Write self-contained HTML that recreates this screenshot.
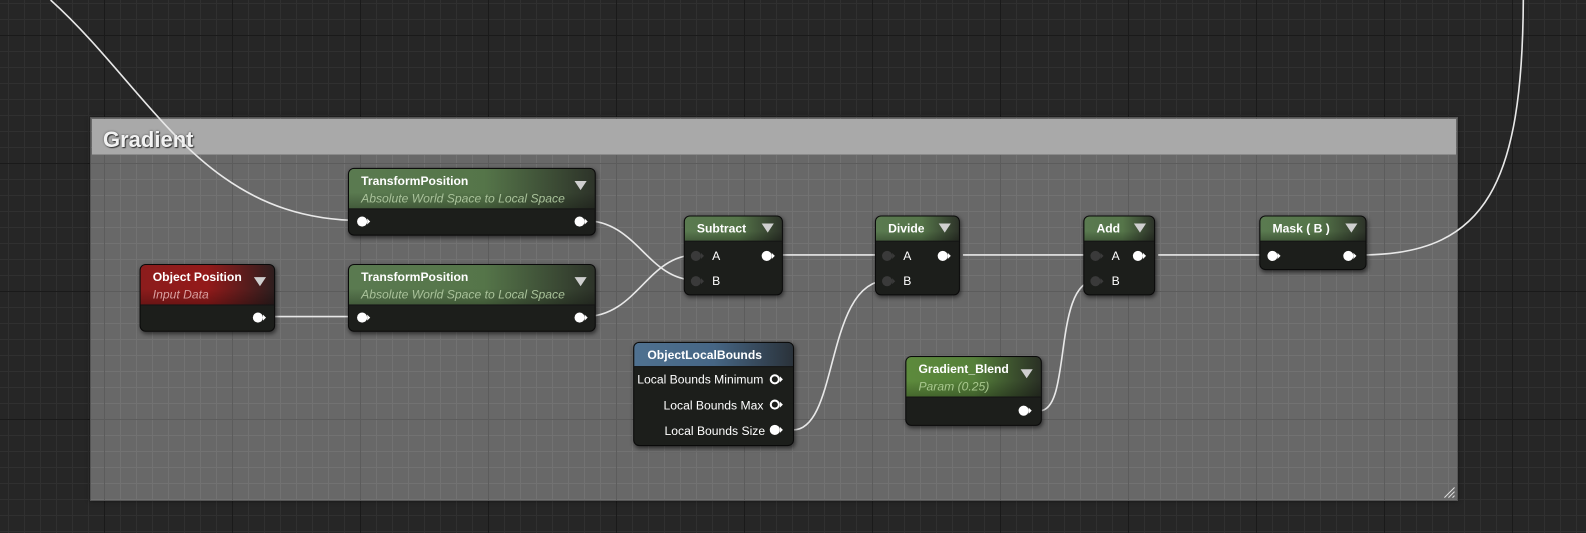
<!DOCTYPE html>
<html><head><meta charset="utf-8"><style>
*{margin:0;padding:0;box-sizing:border-box}
body{width:1586px;height:533px;overflow:hidden;position:relative;font-family:"Liberation Sans",sans-serif;
background-color:#262626;
background-image:linear-gradient(#1a1a1a 1px,transparent 1px),linear-gradient(90deg,#1a1a1a 1px,transparent 1px),linear-gradient(#303030 1px,transparent 1px),linear-gradient(90deg,#303030 1px,transparent 1px);
background-size:128px 128px,128px 128px,16px 16px,16px 16px;
background-position:0 35px,104px 0,0 3px,8px 0}
.box{position:absolute;left:90px;top:117px;width:1368px;height:384px;background-color:#686868;border:1px solid #555;
background-image:linear-gradient(#5c5c5c 1px,transparent 1px),linear-gradient(90deg,#5c5c5c 1px,transparent 1px),linear-gradient(#727272 1px,transparent 1px),linear-gradient(90deg,#727272 1px,transparent 1px);
background-size:128px 128px,128px 128px,16px 16px,16px 16px;
background-position:0 45px,13px 0,0 13px,13px 0;box-shadow:0 0 4px rgba(0,0,0,.5)}
.tb{position:absolute;left:1px;top:1px;right:1px;height:36px;background:#a9a9a9;border-bottom:1px solid #8a8a8a}
.tb span{position:absolute;left:11px;top:8px;font-size:22px;font-weight:bold;color:#f2f2f2;text-shadow:1px 1px 1px #333,0 0 2px #555}
.sc{position:absolute;left:0;top:0;width:1568px;height:527px;transform:scale(1.0115);transform-origin:0 0}
svg{position:absolute;left:0;top:0}
.n{position:absolute;background:#1c1e1b;border:1px solid #0a0a0a;border-radius:6px;box-shadow:1px 2px 4px rgba(0,0,0,.55);overflow:hidden}
.h{position:relative;color:#fff;font-size:12px;font-weight:bold;padding:5px 0 0 12px;border-bottom:1px solid #151515}
.g{background:linear-gradient(to bottom,rgba(0,0,0,0) 60%,rgba(0,0,0,.25)),linear-gradient(90deg,#5a7a50,#557549 55%,#2d3329 100%)}
.r{background:linear-gradient(to bottom,rgba(0,0,0,0) 60%,rgba(0,0,0,.25)),linear-gradient(90deg,#8c1c1c,#931a1a 50%,#2e1e1e 100%)}
.b{background:linear-gradient(90deg,#4f7190,#466685 50%,#2a323a 100%)}
.gb{background:linear-gradient(to bottom,rgba(0,0,0,0) 60%,rgba(0,0,0,.25)),linear-gradient(90deg,#5d8a3c,#55803a 50%,#2a3025 100%)}
.sub{display:block;font-style:italic;font-weight:normal;font-size:12px;margin-top:3px}
.tri{position:absolute;right:8px;top:12px;width:0;height:0;border-left:6px solid transparent;border-right:6px solid transparent;border-top:9px solid #cfcfcf}
.p{position:absolute;width:10px;height:10px;border-radius:50%;background:#fff}
.p::after{content:"";position:absolute;left:10px;top:2px;border-top:3px solid transparent;border-bottom:3px solid transparent;border-left:3px solid #fff}
.o{background:transparent;border:2px solid #fff}
.o::after{left:8px;top:0px}
.d{background:#3a3a3a}
.d::after{border-left-color:#3a3a3a}
.t{position:absolute;color:#fff;font-size:12px}
</style></head><body>
<div class="box"><div class="tb"><span>Gradient</span></div></div>
<div class="sc">
<svg width="1568" height="527" fill="none" stroke="#e8e8e8" stroke-width="1.6">
<path d="M50 0 C150 90 200 218 358 218"/>
<path d="M1351 252 C1470 250 1505 180 1506 0"/>
<path d="M578 218 C630 218 640 277 688 277"/>
<path d="M578 313 C630 313 640 252 688 252"/>
<path d="M261 313 L355 313"/>
<path d="M762 252 L876 252"/>
<path d="M952 252 L1082 252"/>
<path d="M1145 252 L1255 252"/>
<path d="M784 425 C830 425 815 277 878 277"/>
<path d="M1028 406 C1060 406 1040 277 1084 277"/>
</svg>

<div class="n" style="left:344px;top:166px;width:245px;height:67px"><div class="h g" style="height:40px">TransformPosition<span class="sub" style="color:#a9c29a">Absolute World Space to Local Space</span><div class="tri"></div></div>
<div class="p" style="left:8px;top:47px"></div><div class="p" style="left:223px;top:47px"></div></div>

<div class="n" style="left:344px;top:261px;width:245px;height:67px"><div class="h g" style="height:40px">TransformPosition<span class="sub" style="color:#a9c29a">Absolute World Space to Local Space</span><div class="tri"></div></div>
<div class="p" style="left:8px;top:47px"></div><div class="p" style="left:223px;top:47px"></div></div>

<div class="n" style="left:138px;top:261px;width:134px;height:67px"><div class="h r" style="height:40px">Object Position<span class="sub" style="color:#d9a0a0">Input Data</span><div class="tri"></div></div>
<div class="p" style="left:111px;top:47px"></div></div>

<div class="n" style="left:676px;top:213px;width:98px;height:79px"><div class="h g" style="height:25px">Subtract<div class="tri" style="top:7px"></div></div>
<div class="p d" style="left:6px;top:34px"></div><span class="t" style="left:27px;top:32px">A</span><div class="p" style="left:76px;top:34px"></div>
<div class="p d" style="left:6px;top:59px"></div><span class="t" style="left:27px;top:57px">B</span></div>

<div class="n" style="left:865px;top:213px;width:84px;height:79px"><div class="h g" style="height:25px">Divide<div class="tri" style="top:7px"></div></div>
<div class="p d" style="left:6px;top:34px"></div><span class="t" style="left:27px;top:32px">A</span><div class="p" style="left:61px;top:34px"></div>
<div class="p d" style="left:6px;top:59px"></div><span class="t" style="left:27px;top:57px">B</span></div>

<div class="n" style="left:1071px;top:213px;width:71px;height:79px"><div class="h g" style="height:25px">Add<div class="tri" style="top:7px"></div></div>
<div class="p d" style="left:6px;top:34px"></div><span class="t" style="left:27px;top:32px">A</span><div class="p" style="left:48px;top:34px"></div>
<div class="p d" style="left:6px;top:59px"></div><span class="t" style="left:27px;top:57px">B</span></div>

<div class="n" style="left:1245px;top:213px;width:106px;height:54px"><div class="h g" style="height:25px">Mask ( B )<div class="tri" style="top:7px"></div></div>
<div class="p" style="left:7px;top:34px"></div><div class="p" style="left:82px;top:34px"></div></div>

<div class="n" style="left:626px;top:338px;width:159px;height:103px"><div class="h b" style="height:24px;padding-left:13px">ObjectLocalBounds</div>
<span class="t" style="left:3px;top:29px">Local Bounds Minimum</span><div class="p o" style="left:134px;top:31px"></div>
<span class="t" style="left:29px;top:55px">Local Bounds Max</span><div class="p o" style="left:134px;top:56px"></div>
<span class="t" style="left:30px;top:80px">Local Bounds Size</span><div class="p" style="left:134px;top:81px"></div></div>

<div class="n" style="left:895px;top:352px;width:135px;height:69px"><div class="h gb" style="height:40px">Gradient_Blend<span class="sub" style="color:#a8c88e">Param (0.25)</span><div class="tri"></div></div>
<div class="p" style="left:111px;top:48px"></div></div>

<svg width="1568" height="527" stroke="#ddd" stroke-width="1"><path d="M1428 492 L1438 482 M1432 492 L1438 486 M1436 492 L1438 490"/></svg>
</div>
</body></html>
